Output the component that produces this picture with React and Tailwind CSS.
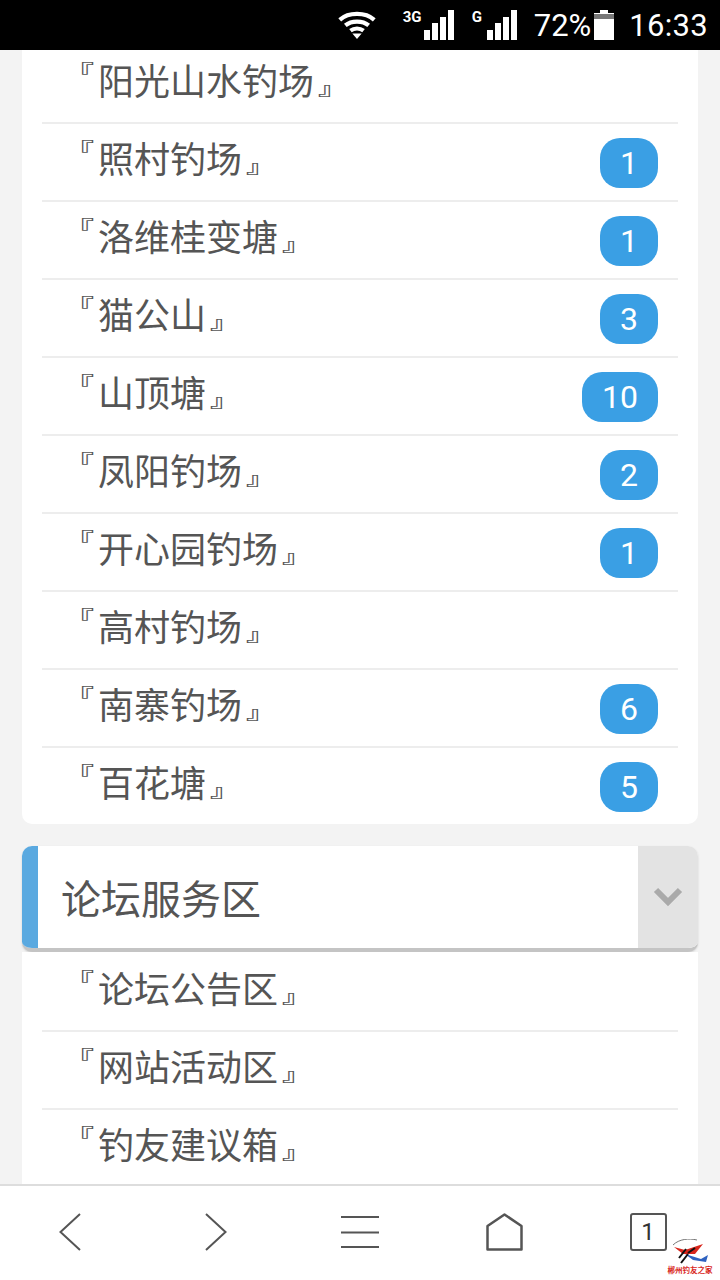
function Row({ name, badge, last }) {
  return (
    <div className={`flex items-center justify-between pl-5 pr-5 ${last ? "h-[76px]" : "h-[78px] border-b-2 border-[#ededed]"}`}>
      <span className="flex items-center h-[72px] text-[36px] leading-[72px] text-[#555555] -mt-[10px] whitespace-nowrap">
        <span className="w-[36px] text-[30px] pl-[2px] leading-none font-bold -translate-y-[9px] scale-y-[0.62]">『</span>
        <span>{name}</span>
        <span className="w-[36px] text-[30px] pl-[4px] leading-none font-bold translate-y-[9px] scale-y-[0.55]">』</span>
      </span>
      {badge ? (
        <span className="flex items-center justify-center h-[50px] min-w-[58px] px-5 mt-[2px] rounded-[20px] bg-[#3a9fe4] text-white text-[32px] leading-none font-['Roboto',sans-serif]">
          {badge}
        </span>
      ) : null}
    </div>
  );
}

function Signal() {
  return (
    <svg width="30" height="30" viewBox="0 0 30 30" fill="#fff">
      <rect x="0" y="20" width="6" height="10" />
      <rect x="8" y="13" width="6" height="17" />
      <rect x="16" y="7" width="6" height="23" />
      <rect x="24" y="0" width="6" height="30" />
    </svg>
  );
}

function StatusBar() {
  return (
    <div className="relative h-[50px] shrink-0 bg-black flex items-center justify-end pr-3 text-white font-['Roboto',sans-serif]">
      <svg className="mr-[27px]" width="38" height="28" viewBox="0 0 40 30" fill="none" stroke="#fff" strokeWidth="4.5">
        <path d="M1.5 9.5C11 1 29 1 38.5 9.5" />
        <path d="M7.5 15.5C14 10 26 10 32.5 15.5" />
        <path d="M13 21C17 18 23 18 27 21" />
        <path d="M15 24L20 30L25 24Z" fill="#fff" stroke="none" />
      </svg>
      <div className="relative w-[51px] h-[30px] mr-[18px]">
        <span className="absolute left-0 top-0 text-[15px] leading-none font-bold">3G</span>
        <div className="absolute right-0 top-0"><Signal /></div>
      </div>
      <div className="relative w-[45px] h-[30px] mr-[17px]">
        <span className="absolute left-0 top-0 text-[15px] leading-none font-bold">G</span>
        <div className="absolute right-0 top-0"><Signal /></div>
      </div>
      <span className="text-[31px] leading-none mr-[3px]">72%</span>
      <svg className="mr-[15px]" width="20" height="30" viewBox="0 0 20 30" fill="#fff">
        <path d="M6 0H14V3H20V30H0V3H6Z" fill="#777" />
        <rect x="0" y="9" width="20" height="21" />
        <path d="M0 3H6V0H14V3H20V4H0Z" />
      </svg>
      <span className="text-[31px] leading-none tracking-[0.3px]">16:33</span>
    </div>
  );
}

function SectionHeader({ title }) {
  return (
    <div className="flex h-[106px] rounded-[10px] overflow-hidden border-b-[4px] border-[#c4c4c4] shadow-[0_1px_2px_rgba(0,0,0,0.15)] bg-white">
      <div className="w-4 bg-[#5aa9e0]" />
      <div className="flex-1 flex items-center pl-[23px] text-[40px] text-[#555555] leading-none">{title}</div>
      <div className="w-[60px] bg-[#e3e3e3] flex items-center justify-center">
        <svg width="30" height="22" viewBox="0 0 30 22" fill="none" stroke="#aaaaaa" strokeWidth="6" strokeLinejoin="miter">
          <path d="M3 4L15 16L27 4" />
        </svg>
      </div>
    </div>
  );
}

function NavCell({ children }) {
  return <div className="flex-1 flex items-center justify-center">{children}</div>;
}

function BottomBar() {
  const stroke = "#555555";
  return (
    <div className="relative h-[96px] shrink-0 bg-white border-t-2 border-[#dddddd] flex items-center pb-[2px]">
      <NavCell>
        <svg className="-ml-1" width="22" height="38" viewBox="0 0 22 38" fill="none" stroke={stroke} strokeWidth="2"><path d="M21 1L1.5 19L21 37" /></svg>
      </NavCell>
      <NavCell>
        <svg width="22" height="38" viewBox="0 0 22 38" fill="none" stroke={stroke} strokeWidth="2"><path d="M1 1L20.5 19L1 37" /></svg>
      </NavCell>
      <NavCell>
        <svg width="38" height="32" viewBox="0 0 38 32" fill="none" stroke={stroke} strokeWidth="2"><path d="M0 1H38M0 16.5H38M0 31H38" /></svg>
      </NavCell>
      <NavCell>
        <svg width="37" height="38" viewBox="0 0 37 38" fill="none" stroke={stroke} strokeWidth="2.5" strokeLinejoin="round"><path d="M1.5 13L18.5 1.5L35.5 13V36.5H1.5Z" /></svg>
      </NavCell>
      <NavCell>
        <div className="w-[37px] h-[38px] border-[2.5px] border-[#555555] rounded-[3px] flex items-center justify-center text-[24px] leading-none text-[#333333] font-['Roboto',sans-serif]">1</div>
      </NavCell>
      <div className="absolute right-[7px] bottom-[6px] w-[46px] flex flex-col items-center">
        <svg width="38" height="26" viewBox="0 0 38 26">
          <path d="M2 6C8 0 18 -1 26 1" fill="none" stroke="#777" strokeWidth="1" />
          <path d="M3 8L14 11L32 5L24 15L12 15Z" fill="#d8261c" />
          <path d="M14 15L30 20L37 16L35 23L22 21Z" fill="#2f62c0" />
          <path d="M8 19L15 10M10 24L17 15M17 14L24 9" stroke="#111" strokeWidth="2" fill="none" />
        </svg>
        <span className="text-[7.5px] leading-[9px] font-bold text-[#d8261c] whitespace-nowrap">郴州钓友之家</span>
      </div>
    </div>
  );
}

export default function App() {
  const top = [
    ["阳光山水钓场"], ["照村钓场", 1], ["洛维桂变塘", 1], ["猫公山", 3], ["山顶塘", 10],
    ["凤阳钓场", 2], ["开心园钓场", 1], ["高村钓场"], ["南寨钓场", 6], ["百花塘", 5],
  ];
  const bottom = ["论坛公告区", "网站活动区", "钓友建议箱"];
  return (
    <div className="w-[720px] h-[1280px] flex flex-col overflow-hidden bg-[#f3f3f3] font-['Noto_Sans_CJK_SC',sans-serif]">
      <StatusBar />
      <div className="flex-1 min-h-0 overflow-hidden px-[22px] -mt-1">
        <div className="bg-white rounded-b-[10px] px-5">
          {top.map(([n, b], i) => <Row key={n} name={n} badge={b} last={i === top.length - 1} />)}
        </div>
        <div className="mt-[22px]"><SectionHeader title="论坛服务区" /></div>
        <div className="bg-white px-5 pt-[2px]">
          {bottom.map((n) => <Row key={n} name={n} />)}
        </div>
      </div>
      <BottomBar />
    </div>
  );
}
